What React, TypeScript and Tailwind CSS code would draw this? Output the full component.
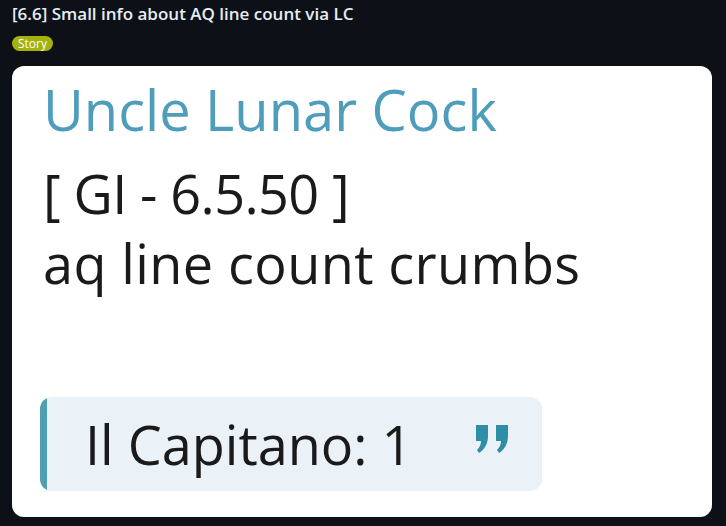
export default function App() {
  return (
    <div className="w-[726px] h-[526px] bg-[#0d1117] px-3 pt-[3px] font-['Open_Sans',sans-serif]">
      <h1 className="text-[17px] leading-[22px] font-semibold text-[#e6edf3]">
        [6.6] Small info about AQ line count via LC
      </h1>
      <div className="mt-[11px] flex">
        <span className="h-[15px] px-[6px] rounded-full bg-[#a3b20c] text-white text-[12px] leading-[15px]">
          Story
        </span>
      </div>
      <div className="mt-[15px] w-[700px] h-[451px] bg-white rounded-[12px] pl-[31px] pr-6 pt-[7px]">
        <div className="text-[56px] leading-[72px] font-medium text-[#4d9dbb]">
          Uncle Lunar Cock
        </div>
        <div className="mt-[13px] text-[54px] leading-[70px] font-medium text-[#1a1a1a] tracking-[-0.6px]">
          [ GI - 6.5.50 ]
        </div>
        <div className="text-[54px] leading-[70px] font-medium text-[#1a1a1a] tracking-[0.4px]">
          aq line count crumbs
        </div>
        <div className="mt-[99px] ml-[-3px] w-[502px] h-[94px] rounded-[12px] bg-[#eaf2f7] flex items-center overflow-hidden">
          <div className="w-[7px] h-full bg-[#4e9fb2] rounded-l-[12px]" />
          <span className="ml-[38px] text-[54px] font-medium text-[#1a1a1a]">Il Capitano: 1</span>
          <svg className="ml-auto mr-[28px] mt-[-10px]" width="42" height="32" viewBox="0 0 42 32">
            <path d="M4 2h12v11c0 7-3 13-9 17l-2-3c3-3 4-6 4-9H4z" fill="#2d8ea6" />
            <path d="M24 2h12v11c0 7-3 13-9 17l-2-3c3-3 4-6 4-9h-5z" fill="#2d8ea6" />
          </svg>
        </div>
      </div>
    </div>
  );
}
